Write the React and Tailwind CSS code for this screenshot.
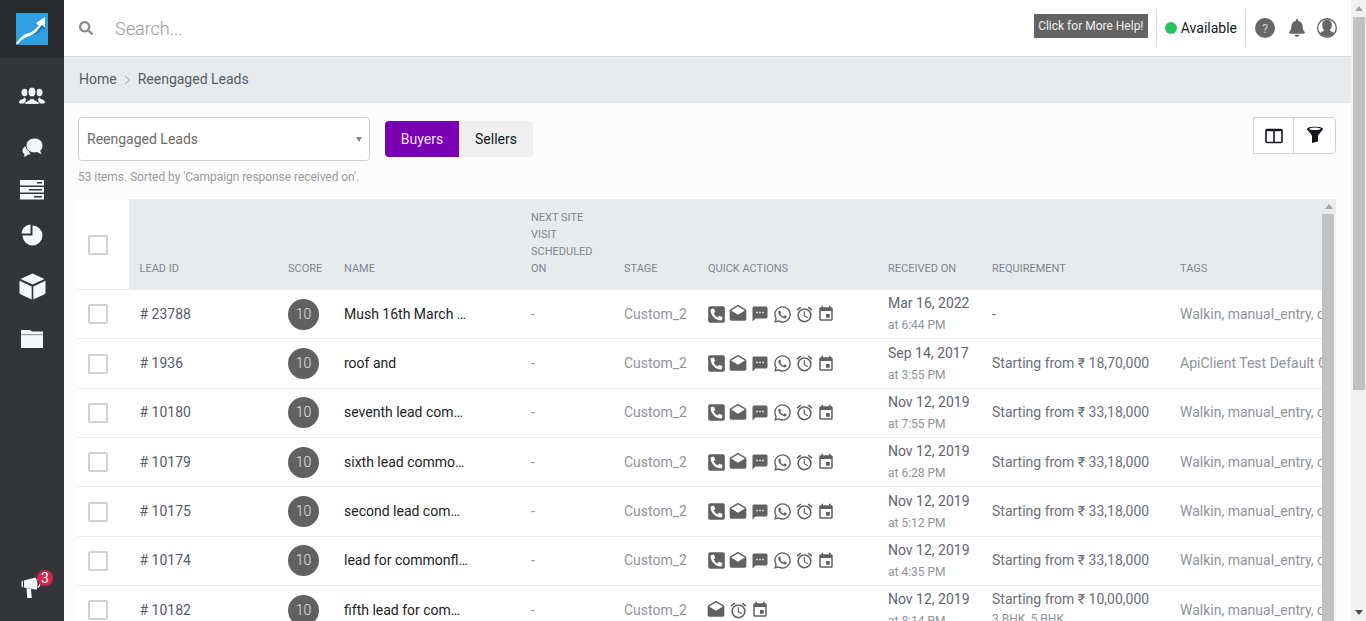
import React from "react";
import { FaSearch, FaBell, FaWhatsapp, FaPhoneSquareAlt } from "react-icons/fa";
import { MdSms, MdOutlineAccessAlarm, MdEvent, MdDrafts } from "react-icons/md";

const rows = [
  { id: "# 23788", name: "Mush 16th March 2022", date: "Mar 16, 2022", time: "at 6:44 PM", req: "-", tags: "Walkin, manual_entry, commonfloor" },
  { id: "# 1936", name: "roof and", date: "Sep 14, 2017", time: "at 3:55 PM", req: "Starting from ₹ 18,70,000", tags: "ApiClient Test Default Campaign" },
  { id: "# 10180", name: "seventh lead commonfloor", date: "Nov 12, 2019", time: "at 7:55 PM", req: "Starting from ₹ 33,18,000", tags: "Walkin, manual_entry, commonfloor" },
  { id: "# 10179", name: "sixth lead commonfloor", date: "Nov 12, 2019", time: "at 6:28 PM", req: "Starting from ₹ 33,18,000", tags: "Walkin, manual_entry, commonfloor" },
  { id: "# 10175", name: "second lead commonfloor", date: "Nov 12, 2019", time: "at 5:12 PM", req: "Starting from ₹ 33,18,000", tags: "Walkin, manual_entry, commonfloor" },
  { id: "# 10174", name: "lead for commonfloor", date: "Nov 12, 2019", time: "at 4:35 PM", req: "Starting from ₹ 33,18,000", tags: "Walkin, manual_entry, commonfloor" },
  { id: "# 10182", name: "fifth lead for commonfloor", date: "Nov 12, 2019", time: "at 8:14 PM", req: "Starting from ₹ 10,00,000", sub: "3 BHK, 5 BHK", tags: "Walkin, manual_entry, commonfloor", few: true },
];

const gridCols = "grid grid-cols-[51px_148px_56px_187px_93px_84px_180px_104px_188px_153px]";
const W = "#f5f7fa";
const D = "#333538";

function Checkbox() {
  return <span className="block w-5 h-5 border-2 border-[#cdd2d9] rounded-[2px] bg-white" />;
}

function Logo() {
  return (
    <svg width="32" height="32" viewBox="0 0 32 32">
      <rect width="32" height="32" fill="#2f9fe2" />
      <path d="M0 31 C4 24 8 21 13 20 C18 19 19 15 23 13 L20 10 L29 4 L29 15 L26 12 C23 15 21 20 16 22 C10 24 6 26 2 31 Z" fill="#fff" />
      <path d="M16 22 C21 20 23 15 26 12 L29 15 L29 17 L26 15 C24 18 21 22 16 22 Z" fill="#1c6fa8" />
    </svg>
  );
}

function PeopleIcon() {
  return (
    <svg width="26" height="18" viewBox="0 0 26 18" fill={W}>
      <ellipse cx="5.500" cy="5.500" rx="3" ry="3.800" />
      <path d="M0 15.500c0-2.500 2.500-3 4-3.500.6-.3.8-.7.8-1.200h1.400c0 .5.200.9.800 1.200L6 16.500H1z" />
      <ellipse cx="20.500" cy="5.500" rx="3" ry="3.800" />
      <path d="M26 15.500c0-2.500-2.500-3-4-3.500-.6-.3-.8-.7-.8-1.200h-1.400c0 .5-.2.900-.8 1.200L20 16.500h5z" />
      <ellipse cx="13" cy="5" rx="4" ry="5" stroke={D} strokeWidth="1" />
      <path d="M5.500 17.500c0-3 3-3.800 4.800-4.500.8-.4 1-.9 1-1.500h3.400c0 .6.200 1.100 1 1.500 1.800.7 4.800 1.500 4.800 4.500z" stroke={D} strokeWidth="1" />
    </svg>
  );
}

function ChatIcon() {
  return (
    <svg width="21" height="20" viewBox="0 0 21 20" fill={W}>
      <path d="M0.500 13c0-2.500 1.500-4.500 4-5l4 8.500-3 .2c-1 1.200-2.300 1.800-4 2 .7-.8 1.100-1.700 1-2.800-1.200-.7-2-1.700-2-2.900z" />
      <path d="M12.500 0c4.700 0 8.500 3.300 8.500 7.500 0 2.100-.8 3.800-2.200 5 .1 1.800.7 3 1.700 4-2 0-3.700-.7-5-2-.9.200-1.800.4-3 .4-4.700 0-8.500-3.200-8.500-7.400S7.800 0 12.500 0z" stroke={D} strokeWidth="1" />
    </svg>
  );
}

function ServerIcon() {
  return (
    <svg width="24" height="20" viewBox="0 0 24 20">
      <rect y="0" width="24" height="5.500" fill={W} />
      <rect x="17" y="2" width="5" height="1.500" fill={D} />
      <rect y="7" width="24" height="5.500" fill={W} />
      <rect x="9" y="9" width="13" height="1.500" fill={D} />
      <rect y="14" width="24" height="5.500" fill={W} />
      <rect x="14" y="16" width="8" height="1.500" fill={D} />
    </svg>
  );
}

function PieIcon() {
  return (
    <svg width="22" height="22" viewBox="0 0 22 22" fill={W}>
      <path d="M11.500 1.500A10 10 0 1 1 1.500 11.500h10z" />
      <path d="M0.500 9.500A9.500 9.500 0 0 1 9.500 0.500v9z" />
    </svg>
  );
}

function CubeIcon() {
  return (
    <svg width="27" height="27" viewBox="0 0 27 27" fill={W}>
      <path d="M13.500 0.500l12 5.500-12 5.500-12-5.500z" />
      <path d="M0.500 7.800l12.200 5.600v13L2 21.500c-1-.5-1.500-1-1.500-2z" />
      <path d="M26.500 7.800l-12.200 5.600v13L25 21.500c1-.5 1.500-1 1.500-2z" />
    </svg>
  );
}

function FolderIcon() {
  return (
    <svg width="22" height="18" viewBox="0 0 22 18">
      <path d="M0 18V0h9l2 1.500h11V18z" fill={W} />
      <rect x="0" y="4" width="22" height="1.200" fill="#9a9c9f" />
    </svg>
  );
}

function HornIcon() {
  return (
    <svg width="21" height="22" viewBox="0 0 21 22" fill={W}>
      <path d="M0.500 5.500c0-1 .6-1.800 1.500-2v7c-.9-.2-1.500-1-1.500-2z" />
      <path d="M3 3.500L14.500 0.500c1.300 2.200 2 5 2 7.500s-.5 3.700-1.200 4.800L3 10.500z" />
      <path d="M16.500 2.500c1.500 1 2.500 2.500 2.500 4s-.7 3-2 4" fill="none" stroke={W} strokeWidth="1.200" />
      <path d="M5.500 11l4.500.9.800 9.100H6.200z" />
    </svg>
  );
}

function QuestionIcon() {
  return (
    <span className="flex items-center justify-center w-5 h-5 rounded-full bg-[#666666] text-[#c9c9c9] text-[13px] leading-none">?</span>
  );
}

function UserIcon() {
  return (
    <svg width="20" height="20" viewBox="0 0 20 20">
      <circle cx="10" cy="10" r="10" fill="#666666" />
      <circle cx="10" cy="10" r="8.600" fill="#ffffff" />
      <path d="M10 1.800c3.200 0 4.800 2.300 4.800 5.200 0 2-.8 3.700-1.800 4.700.1 1.200 1 1.700 2.400 2.300.7.300 1.300.7 1.700 1.200A8.600 8.600 0 0 1 10 18.600a8.600 8.600 0 0 1-7.100-3.400c.4-.5 1-.9 1.700-1.200 1.400-.6 2.300-1.100 2.400-2.300-1-1-1.800-2.700-1.800-4.700 0-2.900 1.600-5.200 4.800-5.200z" fill="#666666" />
    </svg>
  );
}

function ColumnsIcon() {
  return (
    <svg width="18" height="16" viewBox="0 0 18 16" fill="none" stroke="#15181d" strokeWidth="1.600">
      <rect x="1" y="1.500" width="16" height="13" rx="1" />
      <path d="M9 1.500v13" />
      <path d="M1 2.200h16" strokeWidth="2" />
    </svg>
  );
}

function FunnelIcon() {
  return (
    <svg width="16" height="17" viewBox="0 0 16 17" className="mb-[3px]">
      <path d="M0 3C0 0 16 0 16 3c0 1.200-4.500 5-5 7v5.500L5 17v-7C4.500 8 0 4.200 0 3z" fill="#15181d" />
      <ellipse cx="8" cy="2.800" rx="5.800" ry="1.300" fill="#ffffff" />
    </svg>
  );
}

function QuickActions({ few }) {
  const cls = "text-[#616161]";
  const cell = "w-[22px] flex items-center justify-center";
  if (few) {
    return (
      <div className="flex items-center">
        <span className={cell}><MdDrafts size={20} className={cls} /></span>
        <span className={cell}><MdOutlineAccessAlarm size={19} className={cls} /></span>
        <span className={cell}><MdEvent size={18} className={cls} /></span>
      </div>
    );
  }
  return (
    <div className="flex items-center">
      <span className={cell}><FaPhoneSquareAlt size={19} className={cls} /></span>
      <span className={cell}><MdDrafts size={20} className={cls} /></span>
      <span className={cell}><MdSms size={18} className={cls} /></span>
      <span className={cell}><FaWhatsapp size={19} className={cls} /></span>
      <span className={cell}><MdOutlineAccessAlarm size={19} className={cls} /></span>
      <span className={cell}><MdEvent size={18} className={cls} /></span>
    </div>
  );
}

function Row({ r }) {
  return (
    <div className={`${gridCols} h-[49.35px] shrink-0 bg-white border-b border-[#ececec] items-center text-[14px]`}>
      <div className="pl-[10px]"><Checkbox /></div>
      <div className="pl-[10.500px] text-[#555b66]">{r.id}</div>
      <div className="pl-[11px]">
        <span className="flex items-center justify-center w-[31px] h-[31px] rounded-full bg-[#616161] text-[#e2e2e2] font-light">10</span>
      </div>
      <div className="pl-[11px] text-[#1c1c1c] pr-[51px]"><div className="truncate">{r.name}</div></div>
      <div className="pl-[11px] text-[#8f939a]">-</div>
      <div className="pl-[11px] text-[#8f939a]">Custom_2</div>
      <div className="pl-[8px]"><QuickActions few={r.few} /></div>
      <div className="pl-[11px] flex flex-col">
        <span className="text-[#5f6470] leading-[18px] whitespace-nowrap">{r.date}</span>
        <span className="text-[#8f939a] text-[12px] leading-[18px] mt-[4px] whitespace-nowrap">{r.time}</span>
      </div>
      <div className={`pl-[11px] text-[#6b6f78] whitespace-nowrap ${r.sub ? "self-start pt-[4px]" : r.req === "-" ? "" : "pb-[1px]"}`}>
        <div className="leading-[18px]">{r.req}</div>
        {r.sub ? <div className="text-[12px] text-[#8f939a] leading-[18px] mt-[2px]">{r.sub}</div> : null}
      </div>
      <div className="pl-[11px] text-[#8f939a] whitespace-nowrap overflow-hidden">{r.tags}</div>
    </div>
  );
}

function HeaderCell({ children }) {
  return <div className="pl-[11px] self-end pb-[13px] text-[11px] leading-[17px] text-[#7f8590] uppercase">{children}</div>;
}

export default function App() {
  return (
    <div className="flex w-full h-[621px] overflow-hidden bg-[#fcfcfc] font-['Roboto',sans-serif]">
      <aside className="w-16 shrink-0 flex flex-col items-center bg-[#333538]">
        <div className="w-full h-[58px] flex items-center justify-center bg-[#292a2c]"><Logo /></div>
        <div className="mt-[29px]"><PeopleIcon /></div>
        <div className="mt-[33px]"><ChatIcon /></div>
        <div className="mt-[22px]"><ServerIcon /></div>
        <div className="mt-[24px]"><PieIcon /></div>
        <div className="mt-[27px]"><CubeIcon /></div>
        <div className="mt-[30px]"><FolderIcon /></div>
        <div className="relative mt-auto mb-[22px] -ml-[1px]">
          <HornIcon />
          <span className="absolute -top-[7px] left-[16px] w-4 h-4 rounded-full bg-[#d6234f] text-white text-[14px] leading-4 text-center">3</span>
        </div>
      </aside>

      <main className="flex-1 min-w-0 flex flex-col">
        <header className="h-[57px] shrink-0 flex items-center bg-white border-b border-[#d5d9de]">
          <FaSearch size={14} className="ml-[15px] text-[#8c8c8c]" />
          <span className="ml-[22px] text-[18px] font-light text-[#9a9a9a]">Search...</span>
          <div className="ml-auto flex items-center h-full">
            <span className="h-6 -mt-[5px] w-[114px] flex items-center justify-center bg-[#636363] text-[#f0f0f0] text-[12px] whitespace-nowrap">Click for More Help!</span>
            <span className="ml-2 w-px h-[37px] bg-[#dcdcdc]" />
            <span className="ml-2 w-3 h-3 rounded-full bg-[#22c55e]" />
            <span className="ml-[4px] text-[14px] text-[#15181d]">Available</span>
            <span className="ml-2 w-px h-[37px] bg-[#dcdcdc]" />
            <span className="ml-[9px]"><QuestionIcon /></span>
            <FaBell size={18} className="ml-[13px] text-[#666666]" />
            <span className="ml-[11px] mr-[14px]"><UserIcon /></span>
          </div>
        </header>

        <nav className="h-[46px] shrink-0 flex items-center pl-[15px] bg-[#e8ebee] border-b border-[#e1e4e8] text-[14px] text-[#555b66]">
          <span>Home</span>
          <svg width="7" height="10" viewBox="0 0 7 10" fill="none" stroke="#9ea3aa" strokeWidth="1" className="mx-[7px]"><path d="M1 1l4.500 4-4.500 4" /></svg>
          <span>Reengaged Leads</span>
        </nav>

        <section className="flex-1 min-h-0 flex flex-col pl-[14px] pr-[15px] pt-[14px]">
          <div className="flex items-start shrink-0">
            <div className="w-[292px] h-[44px] flex items-center justify-between pl-2 pr-[7px] bg-white border border-[#ccd1d9] rounded text-[14px] text-[#6d6a68]">
              <span>Reengaged Leads</span>
              <span className="w-0 h-0 border-x-[3.500px] border-x-transparent border-t-[5px] border-t-[#8a8a8a]" />
            </div>
            <div className="ml-[15px] mt-1 flex h-9 text-[14px]">
              <span className="w-[74px] flex items-center justify-center bg-[#7a00b3] text-[#f2e6f8] rounded-l">Buyers</span>
              <span className="w-[74px] flex items-center justify-center bg-[#efefef] text-[#15181d] rounded-r">Sellers</span>
            </div>
            <div className="ml-auto flex h-[37px] bg-white border border-[#ccd1d9] rounded-r">
              <span className="w-10 flex items-center justify-center border-r border-[#ccd1d9]"><ColumnsIcon /></span>
              <span className="w-[41px] flex items-center justify-center"><FunnelIcon /></span>
            </div>
          </div>
          <p className="mt-[9px] h-[15px] leading-[15px] text-[12px] tracking-[-0.05px] text-[#9a9a9a] shrink-0">53 items. Sorted by 'Campaign response received on'.</p>

          <div className="mt-[14px] flex-1 min-h-0 flex overflow-hidden">
            <div className="flex-1 min-w-0 flex flex-col overflow-hidden">
              <div className={`${gridCols} h-[91px] shrink-0 bg-[#e8ebee]`}>
                <div className="bg-white border-b border-[#ececec] flex items-center pl-[10px] pt-[2px]"><Checkbox /></div>
                <div className="pl-[10.500px] self-end pb-[13px] text-[11px] leading-[17px] text-[#7f8590] uppercase">Lead ID</div>
                <HeaderCell>Score</HeaderCell>
                <HeaderCell>Name</HeaderCell>
                <HeaderCell>Next Site<br />Visit<br />Scheduled<br />On</HeaderCell>
                <HeaderCell>Stage</HeaderCell>
                <HeaderCell>Quick Actions</HeaderCell>
                <HeaderCell>Received On</HeaderCell>
                <HeaderCell>Requirement</HeaderCell>
                <HeaderCell>Tags</HeaderCell>
              </div>
              {rows.map((r) => <Row key={r.id} r={r} />)}
            </div>
            <div className="w-[14px] shrink-0 flex flex-col bg-[#f4f4f4]">
              <div className="h-[15px] shrink-0 flex items-center justify-center bg-[#e8ebee]">
                <span className="w-0 h-0 border-x-[4px] border-x-transparent border-b-[5px] border-b-[#a3a3a3]" />
              </div>
              <div className="flex-1 w-3 bg-[#c1c1c1]" />
            </div>
          </div>
        </section>
      </main>

      <div className="w-[15px] shrink-0 flex flex-col items-center bg-[#f1f1f1]">
        <div className="h-[17px] shrink-0 flex items-center justify-center">
          <span className="w-0 h-0 border-x-[4px] border-x-transparent border-b-[5px] border-b-[#a3a3a3]" />
        </div>
        <div className="w-3 h-[373px] shrink-0 bg-[#c1c1c1]" />
        <div className="mt-auto h-[17px] flex items-center justify-center">
          <span className="w-0 h-0 border-x-[4px] border-x-transparent border-t-[5px] border-t-[#505050]" />
        </div>
      </div>
    </div>
  );
}
